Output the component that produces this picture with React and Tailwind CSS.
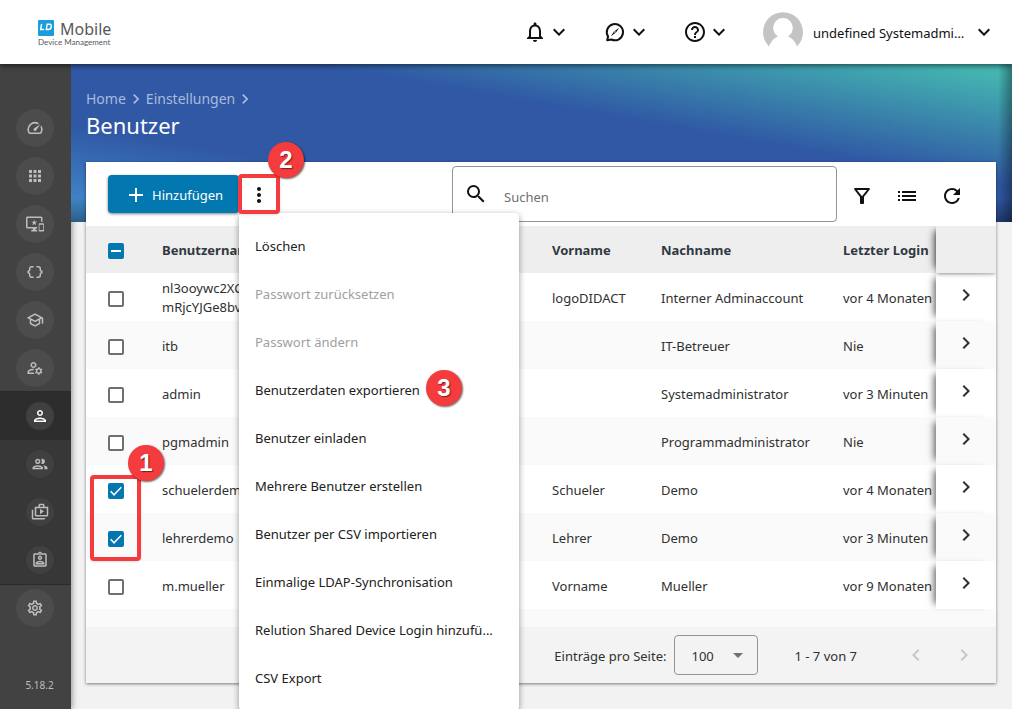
import React, { useState } from 'react'
import {
    MdNotificationsNone, MdHelpOutline, MdExpandMore, MdOutlineSpeed, MdApps, MdOutlineImportantDevices,
    MdDataObject, MdOutlineSchool, MdOutlineManageAccounts, MdOutlinePerson, MdOutlineGroup,
    MdOutlineShopTwo, MdOutlineAssignmentInd, MdOutlineSettings, MdAdd, MdMoreVert, MdSearch,
    MdOutlineFilterAlt, MdList, MdRefresh, MdChevronRight, MdChevronLeft, MdArrowDropDown,
} from 'react-icons/md';

const mainNav = [
    { label: 'Dashboard', icon: MdOutlineSpeed },
    { label: 'Apps', icon: MdApps },
    { label: 'Geräte', icon: MdOutlineImportantDevices },
    { label: 'Richtlinien', icon: MdDataObject },
    { label: 'Schule', icon: MdOutlineSchool },
    { label: 'Benutzerverwaltung', icon: MdOutlineManageAccounts },
];

const subNav = [
    { label: 'Benutzer', icon: MdOutlinePerson, active: true },
    { label: 'Gruppen', icon: MdOutlineGroup },
    { label: 'Stores', icon: MdOutlineShopTwo },
    { label: 'Rollen', icon: MdOutlineAssignmentInd },
];

const initialUsers = [
    { name: 'nl3ooywc2XC mRjcYJGe8bv', vorname: 'logoDIDACT', nachname: 'Interner Adminaccount', login: 'vor 4 Monaten' },
    { name: 'itb', vorname: '', nachname: 'IT-Betreuer', login: 'Nie' },
    { name: 'admin', vorname: '', nachname: 'Systemadministrator', login: 'vor 3 Minuten' },
    { name: 'pgmadmin', vorname: '', nachname: 'Programmadministrator', login: 'Nie' },
    { name: 'schuelerdemo', vorname: 'Schueler', nachname: 'Demo', login: 'vor 4 Monaten' },
    { name: 'lehrerdemo', vorname: 'Lehrer', nachname: 'Demo', login: 'vor 3 Minuten' },
    { name: 'm.mueller', vorname: 'Vorname', nachname: 'Mueller', login: 'vor 9 Monaten' },
];

const menuItems = [
    { label: 'Löschen' },
    { label: 'Passwort zurücksetzen', disabled: true },
    { label: 'Passwort ändern', disabled: true },
    { label: 'Benutzerdaten exportieren', step: 3 },
    { label: 'Benutzer einladen' },
    { label: 'Mehrere Benutzer erstellen' },
    { label: 'Benutzer per CSV importieren' },
    { label: 'Einmalige LDAP-Synchronisation' },
    { label: 'Relution Shared Device Login hinzufügen' },
    { label: 'CSV Export' },
];

const StepBadge = ({ number, className }) => (
    <span className={`absolute z-30 flex h-9 w-9 items-center justify-center rounded-full bg-[#f43b3d] font-['Liberation_Sans',sans-serif] text-2xl font-bold text-white shadow-[1px_1px_2px_rgba(0,0,0,0.6)] [text-shadow:1px_1px_1px_rgba(0,0,0,0.5)] ${className}`}>
        {number}
    </span>
);

const Checkbox = ({ label, checked, indeterminate, onChange }) => (
    <label className="relative block h-4 w-4">
        <input
            type="checkbox"
            aria-label={label}
            checked={checked}
            onChange={onChange}
            className={`block h-4 w-4 appearance-none rounded-xs border-2 ${checked || indeterminate ? 'border-[#0277b0] bg-[#0277b0]' : 'border-[#707070] bg-white'}`}
        />
        {(checked || indeterminate) && (
            <svg viewBox="0 0 16 16" className={`pointer-events-none absolute inset-0 h-4 w-4 fill-none stroke-white ${indeterminate ? 'stroke-2' : 'stroke-[1.5]'}`}>
                <path d={indeterminate ? 'M3 8h10' : 'M2.7 8.3 6 11.8 13.3 4.3'} />
            </svg>
        )}
    </label>
);

const CompassIcon = () => (
    <svg viewBox="0 0 24 24" className="h-6 w-6">
        <path d="M4.2 20.2 5.1 16.6A8.1 8.1 0 1 1 8.4 19.5Z" fill="none" stroke="currentColor" strokeWidth="2" strokeLinejoin="round" />
        <path d="m16.2 7.8-3.2 4.8-5.2 3.6 3.2-4.8Z" fill="currentColor" />
        <circle cx="12" cy="12" r="0.8" fill="white" />
    </svg>
);

const Logo = () => (
    <a href="#" className="block pt-0.5 text-[#58585a]">
        <span className="flex items-start gap-1.5">
            <svg viewBox="0 0 16 16" className="h-4 w-4" aria-hidden="true">
                <rect width="16" height="16" rx="1" fill="#1b9ddb" />
                <path d="M3.6 4 2.6 9.5H6M9.2 4.2h2.4q2 0 1.6 2.6t-2.6 2.7H8.300Z" fill="none" stroke="white" strokeWidth="1.4" />
            </svg>
            <span className="text-base leading-[18px]">Mobile</span>
        </span>
        <span className="block font-['Lato',sans-serif] text-[8px] leading-2">Device Management</span>
    </a>
);

const Header = () => (
    <header className="relative z-20 flex h-16 items-center bg-white pl-[38px] pr-4 shadow-[0_2px_5px_rgba(0,0,0,0.5)]">
        <Logo />
        <div className="ml-auto flex items-center">
            <button aria-label="Benachrichtigungen" className="mr-8 flex items-center">
                <MdNotificationsNone className="h-6 w-6" />
                <MdExpandMore className="h-6 w-6" />
            </button>
            <button aria-label="Erkunden" className="mr-8 flex items-center">
                <CompassIcon />
                <MdExpandMore className="h-6 w-6" />
            </button>
            <button aria-label="Hilfe" className="mr-8 flex items-center">
                <MdHelpOutline className="h-6 w-6" />
                <MdExpandMore className="h-6 w-6" />
            </button>
            <button className="flex items-center">
                <svg viewBox="0 0 40 40" className="mr-2.5 h-10 w-10" aria-hidden="true">
                    <path d="M6 34.5a20 20 0 1 1 28 0Q31.5 27 25 24.2A9.8 9.8 0 1 0 15 24.2Q8.5 27 6 34.5Z" fill="#c4c4c4" />
                </svg>
                <span className="w-[153px] truncate pt-0.5 text-left">undefined Systemadministrator</span>
                <MdExpandMore className="ml-1.5 h-6 w-6" />
            </button>
        </div>
    </header>
);

const Sidebar = () => (
    <nav className="flex w-[71px] shrink-0 flex-col bg-[#424242] pt-10 text-[#bdbdbd] shadow-[1px_0_6px_rgba(0,0,0,0.4)]">
        {mainNav.map(({ label, icon: Icon }) => (
            <a key={label} href="#" aria-label={label} className="flex h-12 items-center pl-4">
                <span className="flex h-[38px] w-[38px] items-center justify-center rounded-full bg-[#4c4c4c]">
                    <Icon className="h-[18px] w-[18px]" />
                </span>
            </a>
        ))}
        <div className="bg-[#373737] shadow-[0_-1px_0_#2a2a2a,0_1px_0_#2a2a2a]">
            {subNav.map(({ label, icon: Icon, active }) => (
                <a key={label} href="#" aria-label={label} className={`flex h-12 items-center pl-[26px] ${active ? 'bg-[#2d2d2d] text-white' : ''}`}>
                    <span className="flex h-7 w-7 items-center justify-center rounded-full bg-[#404040]">
                        <Icon className="h-[18px] w-[18px]" />
                    </span>
                </a>
            ))}
        </div>
        <a href="#" aria-label="Einstellungen" className="flex h-12 items-center pl-4">
            <span className="flex h-[38px] w-[38px] items-center justify-center rounded-full bg-[#4c4c4c]">
                <MdOutlineSettings className="h-[18px] w-[18px]" />
            </span>
        </a>
        <span className="mt-auto pb-3.5 pl-2 text-center text-[10px]">5.18.2</span>
    </nav>
);

const ActionMenu = () => (
    <div role="menu" className="absolute left-0 top-full z-10 w-[280px] rounded-sm bg-white pb-2 pt-[9px] shadow-[0_2px_6px_rgba(0,0,0,0.4)]">
        {menuItems.map(({ label, disabled, step }) => (
            <button key={label} role="menuitem" disabled={disabled} className="relative flex h-12 w-full items-center px-4 text-left text-[#212121] disabled:text-[#a0a0a0]">
                <span className="truncate pr-1.5">{label}</span>
                {step && <StepBadge number={step} className="left-[187px] top-1" />}
            </button>
        ))}
    </div>
);

const Toolbar = () => (
    <div className="flex h-16 items-center pl-[22px] pr-8">
        <button className="flex h-[38px] w-[131px] items-center gap-1 rounded-sm bg-[#0277b0] pl-4 pt-0.5 text-white shadow-[0_1px_3px_rgba(0,0,0,0.5)]">
            <MdAdd className="h-6 w-6" />
            Hinzufügen
        </button>
        <div className="relative">
            <button aria-label="Weitere Aktionen" className="relative flex h-[38px] w-10 items-center justify-center pt-0.5">
                <MdMoreVert className="h-6 w-6" />
            </button>
            {/* marks the open menu button */}
            <div className="pointer-events-none absolute -inset-px z-20 rounded-sm border-4 border-[#f43b3d] shadow-sm"></div>
            <StepBadge number={2} className="-top-[33px] left-[29px]" />
            <ActionMenu />
        </div>
        <label className="ml-auto flex h-14 w-[385px] items-center rounded-sm border border-[#949494] pl-[11px]">
            <MdSearch className="h-6 w-6 shrink-0" />
            <input type="search" placeholder="Suchen" aria-label="Suchen" className="ml-4 h-full w-full min-w-0 pt-1.5 outline-none placeholder:text-[#707070]" />
        </label>
        <div className="flex items-center gap-[21px] pl-[13px] pt-1">
            <button aria-label="Filter"><MdOutlineFilterAlt className="h-6 w-6" /></button>
            <button aria-label="Spalten"><MdList className="h-6 w-6" /></button>
            <button aria-label="Aktualisieren"><MdRefresh className="h-6 w-6" /></button>
        </div>
    </div>
);

const UserTable = () => {
    const [selected, setSelected] = useState([4, 5]);

    const toggle = (index) => {
        setSelected(selected.includes(index) ? selected.filter(i => i !== index) : [...selected, index]);
    };

    return (
        <div className="relative overflow-hidden">
            <table className="w-full table-fixed border-separate border-spacing-0 text-left">
                <colgroup>
                    <col className="w-[60px]" />
                    <col />
                    <col className="w-[109px]" />
                    <col className="w-[182px]" />
                    <col className="w-[109px]" />
                    <col className="w-[60px]" />
                </colgroup>
                <thead>
                    <tr className="h-[47px] bg-[#eeeeee] text-[#303841]">
                        <th className="pl-[22px] pt-0.5">
                            <Checkbox
                                label="Alle auswählen"
                                checked={selected.length === initialUsers.length}
                                indeterminate={selected.length > 0 && selected.length < initialUsers.length}
                                onChange={() => setSelected(selected.length ? [] : initialUsers.map((_, i) => i))}
                            />
                        </th>
                        <th className="px-4">Benutzername</th>
                        <th className="px-4">Vorname</th>
                        <th className="px-4">Nachname</th>
                        <th className="whitespace-nowrap pl-4">Letzter Login</th>
                        <th className="relative z-1 bg-[#eeeeee] shadow-[-7px_0_7px_-5px_rgba(0,0,0,0.6),0_2px_4px_-1px_rgba(0,0,0,0.4)]" aria-label="Details"></th>
                    </tr>
                </thead>
                <tbody>
                    {initialUsers.map((user, index) => (
                        <tr key={user.name} className="h-12 bg-white text-[#303030] even:bg-[#fafafa]">
                            <td className="pl-[22px] pt-1">
                                <Checkbox label={user.name} checked={selected.includes(index)} onChange={() => toggle(index)} />
                            </td>
                            <td className="px-4 pt-0.5 leading-[19px]"><div className="w-24">{user.name}</div></td>
                            <td className="px-4 pt-0.5">{user.vorname}</td>
                            <td className="px-4 pt-0.5">{user.nachname}</td>
                            <td className="whitespace-nowrap pl-4 pt-0.5">{user.login}</td>
                            <td className="relative bg-inherit shadow-[-7px_0_7px_-5px_rgba(0,0,0,0.6)]">
                                <button aria-label={`${user.name} öffnen`} className="mx-auto block pb-1">
                                    <MdChevronRight className="h-6 w-6" />
                                </button>
                            </td>
                        </tr>
                    ))}
                </tbody>
            </table>
            <div className="h-[18px]"></div>
        </div>
    );
};

const Pagination = () => (
    <div className="relative flex h-14 items-center justify-end bg-[#f3f3f3] pr-5 text-[#303030]">
        <label htmlFor="pageSize" className="pt-0.5">Einträge pro Seite:</label>
        <div className="relative ml-2">
            <select id="pageSize" defaultValue="100" className="h-10 w-[84px] appearance-none rounded-sm border border-[#949494] pl-4 pt-0.5">
                <option>25</option>
                <option>50</option>
                <option>100</option>
            </select>
            <MdArrowDropDown className="pointer-events-none absolute right-2 top-2 h-6 w-6 text-[#707070]" />
        </div>
        <span className="ml-9 mr-[47px] pt-0.5">1 - 7 von 7</span>
        <div className="flex gap-6 text-[#c8c8c8]">
            <button disabled aria-label="Vorherige Seite"><MdChevronLeft className="h-6 w-6" /></button>
            <button disabled aria-label="Nächste Seite"><MdChevronRight className="h-6 w-6" /></button>
        </div>
    </div>
);

const App = () => {
    return (
        <div className="flex h-screen flex-col overflow-hidden bg-[#f2f2f2] font-['Noto_Sans',sans-serif] text-[13px] leading-5 text-[#111111]">
            <Header />
            <div className="flex min-h-0 flex-1">
                <Sidebar />
                <main className="min-w-0 flex-1 bg-[linear-gradient(270deg,rgba(0,0,0,0.35),transparent_14px),linear-gradient(0deg,rgba(0,0,0,0.35),transparent_24px),linear-gradient(190deg,#44b5b1_4%,#3058a5_38%,#3058a5_70%,#4490d0)] bg-[length:100%_158px] bg-no-repeat pl-[15px] pr-4 pt-[25px]">
                    <nav aria-label="Brotkrumen" className="flex items-center text-sm text-[#a9bbdc]">
                        <a href="#">Home</a>
                        <MdChevronRight className="h-5 w-5" />
                        <a href="#">Einstellungen</a>
                        <MdChevronRight className="h-5 w-5" />
                    </nav>
                    <h1 className="pb-[21px] text-[22px] leading-8 text-white">Benutzer</h1>
                    <section className="relative bg-[#fafafa] shadow-[0_1px_3px_rgba(0,0,0,0.5)]">
                        <div className="relative z-10 bg-white">
                            <Toolbar />
                        </div>
                        <UserTable />
                        <Pagination />
                        {/* marks the selected rows */}
                        <div className="pointer-events-none absolute left-1 top-[313px] h-[86px] w-[51px] rounded-sm border-4 border-[#f43b3d] shadow-sm"></div>
                        <StepBadge number={1} className="left-[42px] top-[283px]" />
                    </section>
                </main>
            </div>
        </div>
    )
}

export default App
